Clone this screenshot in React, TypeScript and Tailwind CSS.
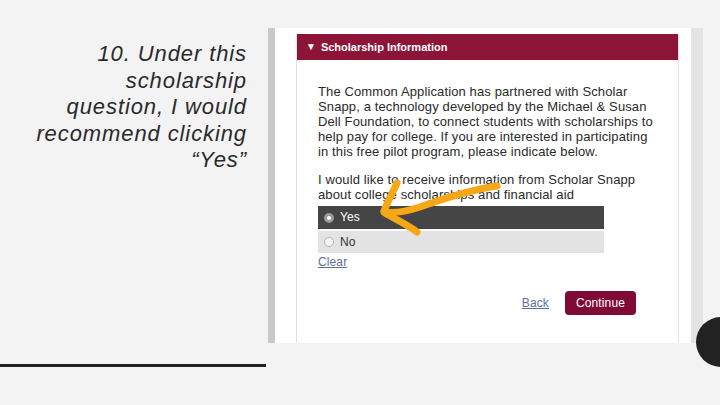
import React from "react";

export default function App() {
  return (
    <div
      className="relative w-[720px] h-[405px] overflow-hidden bg-[#f3f3f3] flex"
      style={{ fontFamily: '"Liberation Sans", Arial, sans-serif' }}
    >
      {/* Left column */}
      <div className="w-[268px] h-full flex flex-col">
        <div className="pt-[41px] pr-[21px] text-right italic text-[22px] leading-[26.5px] tracking-[0.9px] text-[#2a2a2a]">
          10. Under this
          <br />
          scholarship
          <br />
          question, I would
          <br />
          recommend clicking
          <br />
          “Yes”
        </div>
        <div className="mt-auto mb-[38px] w-[266px] h-[3px] bg-[#222]" />
      </div>

      {/* Screenshot panel */}
      <div className="pt-[28px]">
        <div className="w-[435px] h-[315px] flex">
          <div className="w-[7px] bg-[#c9c9c9]" />
          <div className="w-[416px] bg-white pl-[21px] pt-[6px]">
            <div className="w-[383px] h-full border-x border-[#e2e2e2] flex flex-col">
              <div className="h-[26px] bg-[#8c1537] flex items-center pl-[9px] text-white font-bold text-[11px]">
                <span className="text-[10px] mr-[5px] leading-none">▼</span>
                <span>Scholarship Information</span>
              </div>
              <div className="pl-[21px] pt-[24px] text-[13px] leading-[15px] text-[#2a2a2a] whitespace-nowrap tracking-[0.12px]">
                <p>
                  The Common Application has partnered with Scholar
                  <br />
                  Snapp, a technology developed by the Michael &amp; Susan
                  <br />
                  Dell Foundation, to connect students with scholarships to
                  <br />
                  help pay for college. If you are interested in participating
                  <br />
                  in this free pilot program, please indicate below.
                </p>
                <p className="mt-[13px]">
                  I would like to receive information from Scholar Snapp
                  <br />
                  about college scholarships and financial aid
                </p>
                <div className="mt-[4px] w-[286px] flex flex-col gap-[2px]">
                  <div className="h-[23px] bg-[#454545] flex items-center pl-[6px] text-white text-[12px]">
                    <span className="w-[10px] h-[10px] rounded-full bg-white border-[3px] border-[#9a9a9a] mr-[6px]" />
                    <span>Yes</span>
                  </div>
                  <div className="h-[22px] bg-[#e3e3e3] flex items-center pl-[6px] text-[#333] text-[12px]">
                    <span className="w-[10px] h-[10px] rounded-full bg-[#f4f4f4] border border-[#b5b5b5] mr-[6px]" />
                    <span>No</span>
                  </div>
                </div>
                <div className="mt-[2px] text-[12px] text-[#5f6f9c] underline">Clear</div>
                <div className="mt-[21px] flex items-center justify-end pr-[42px] gap-[16px]">
                  <span className="text-[12px] text-[#5f6f9c] underline">Back</span>
                  <div className="w-[71px] h-[24px] rounded-[4px] bg-[#800a36] text-white text-[12px] flex items-center justify-center">
                    Continue
                  </div>
                </div>
              </div>
            </div>
          </div>
          <div className="w-[12px] bg-[#e4e4e4]" />
        </div>
      </div>

      {/* Hand-drawn arrow */}
      <svg
        className="absolute left-0 top-0 pointer-events-none"
        width="720"
        height="405"
        viewBox="0 0 720 405"
      >
        <g
          fill="none"
          stroke="#f5a716"
          strokeWidth="7"
          strokeLinecap="round"
          strokeLinejoin="round"
        >
          <path d="M497 186 C470 190 445 198 420 207 C405 212 392 213 384 212" />
          <path d="M397 183 C393 192 388 201 384 211" />
          <path d="M385 213 C395 219 408 225 417 232" />
        </g>
      </svg>

      {/* Dark circle */}
      <div className="absolute left-[696px] top-[317px] w-[50px] h-[50px] rounded-full bg-[#222]" />
    </div>
  );
}
